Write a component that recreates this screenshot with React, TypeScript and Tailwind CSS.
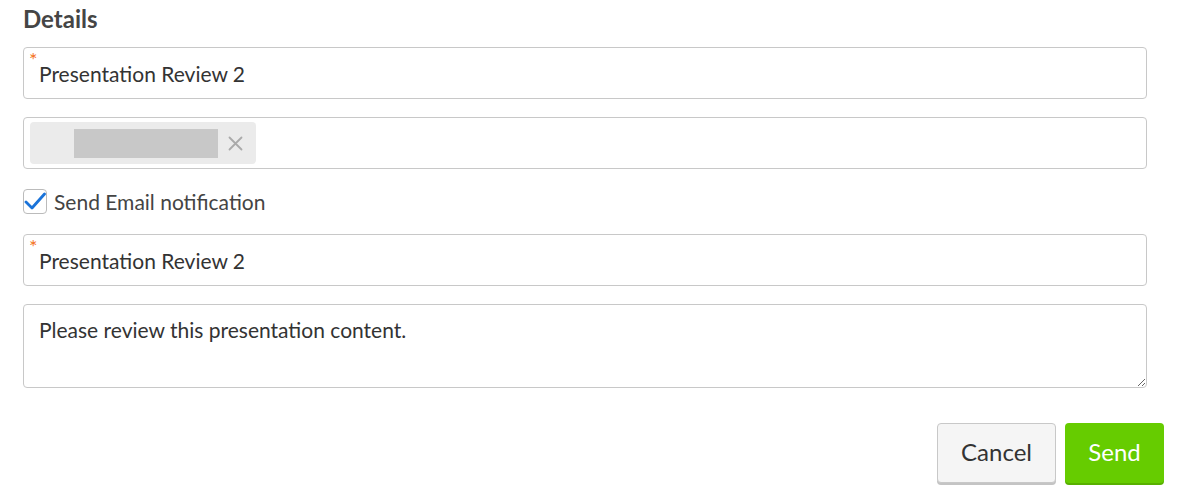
import { useState } from "react";

function RequiredInput({ value }: { value: string }) {
	return (
		<div className="relative">
			<span className="absolute left-[6px] top-[2px] text-[20px] leading-none text-[#f47326]">*</span>
			<input
				defaultValue={value}
				className="w-full h-[52px] rounded-[4px] border border-[#c8c8c8] bg-white px-[15px] text-[21px] text-[#333] outline-none"
			/>
		</div>
	);
}

export default function App() {
	const [notify, setNotify] = useState(true);

	return (
		<div className="w-[1180px] h-[501px] bg-white font-['Lato','Liberation_Sans',sans-serif] text-[#333]">
			<div className="w-[1124px] ml-[23px] pt-[3px]">
				<h2 className="text-[24px] font-bold text-[#454545] leading-[32px] mb-[12px]">Details</h2>

				<RequiredInput value="Presentation Review 2" />

				<div className="mt-[18px] h-[52px] rounded-[4px] border border-[#c8c8c8] flex items-center px-[6px]">
					<div className="flex items-center h-[42px] w-[226px] rounded-[4px] bg-[#ebebeb] pl-[44px] pr-[13px]">
						<div className="w-[144px] h-[29px] bg-[#c8c8c8]" />
						<svg className="ml-auto" width="15" height="15" viewBox="0 0 15 15">
							<path d="M1.5 1.5 L13.5 13.5 M13.5 1.5 L1.5 13.5" stroke="#aaa" strokeWidth="1.8" strokeLinecap="round" />
						</svg>
					</div>
				</div>

				<label className="mt-[19px] h-[26px] flex items-center gap-[7px] cursor-pointer">
					<span
						onClick={() => setNotify(!notify)}
						className="w-[24px] h-[25px] rounded-[4px] border border-[#bbb] bg-white flex items-center justify-center"
					>
						{notify && (
							<svg width="22" height="22" viewBox="0 0 22 22">
								<path d="M2 12 L8 18 L20.5 4" fill="none" stroke="#1a73d9" strokeWidth="2.8" strokeLinecap="round" strokeLinejoin="round" />
							</svg>
						)}
					</span>
					<span className="text-[21px] leading-none text-[#444]">Send Email notification</span>
				</label>

				<div className="mt-[20px]">
					<RequiredInput value="Presentation Review 2" />
				</div>

				<textarea
					defaultValue="Please review this presentation content."
					className="mt-[18px] block w-full h-[84px] rounded-[4px] border border-[#c8c8c8] px-[15px] pt-[10px] text-[21px] leading-[30px] text-[#333] outline-none"
				/>
			</div>

			<div className="flex justify-end gap-[9px] pr-[16px] mt-[35px]">
				<button className="w-[119px] h-[60px] rounded-[4px] border border-[#c8c8c8] bg-[#f5f5f5] shadow-[0_2px_0_#c4c4c4] text-[24px] leading-none pb-[3px] text-[#333]">
					Cancel
				</button>
				<button className="w-[99px] h-[60px] rounded-[4px] bg-[#66cc00] shadow-[0_2px_0_#58b000] text-[24px] leading-none pb-[3px] text-white">
					Send
				</button>
			</div>
		</div>
	);
}
